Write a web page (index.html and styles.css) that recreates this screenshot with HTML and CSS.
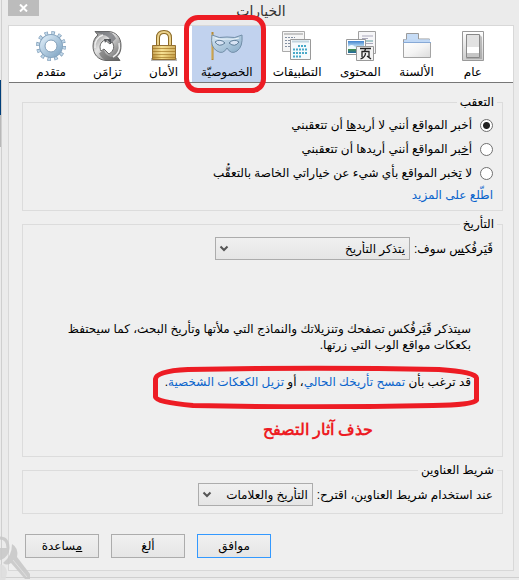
FILE: index.html
```html
<!DOCTYPE html>
<html lang="ar" dir="rtl">
<head>
<meta charset="utf-8">
<title>الخيارات</title>
<link rel="stylesheet" href="styles.css">
</head>
<body>
<svg class="watermark" width="32" height="46" viewBox="0 0 32 46" aria-hidden="true">
  <path d="M0 3q8 0 8 10q0 7-8 11" fill="none" stroke="#c9c9c9" stroke-width="3"/>
  <path d="M0 13h8q0 8-8 12z" fill="#c9c9c9"/>
  <path d="M12 9q7 4 5 13l13 17v5h-5L11 28q-4 3-8 0q9-7 9-19z" fill="#c9c9c9"/>
  <path d="M13 25l14 17" stroke="#dedede" stroke-width="1"/>
  <path d="M0 29q7 2 7 9l-2 8H0" fill="#dedede"/>
</svg>
<div class="window">
  <header class="titlebar">
    <h1>الخيارات</h1>
    <button class="close" aria-label="إغلاق"><svg width="9" height="8" viewBox="0 0 9 8"><path d="M1 0.5l7 7M8 0.5l-7 7" stroke="#fff" stroke-width="2"/></svg></button>
  </header>
  <main class="dialog">
    <nav class="tabs">
      <button class="tab">
        <svg width="32" height="32" viewBox="0 0 32 32">
          <defs>
            <linearGradient id="sw" x2="0" y2="1"><stop offset="0" stop-color="#fff"/><stop offset="1" stop-color="#ccc"/></linearGradient>
            <linearGradient id="folder" x2="1" y2="1"><stop offset="0" stop-color="#fff"/><stop offset=".5" stop-color="#f4f4f4"/><stop offset="1" stop-color="#dcdcdc"/></linearGradient>
            <linearGradient id="blue" x2="1" y2="1"><stop offset="0" stop-color="#d9e9f5"/><stop offset="1" stop-color="#86aac7"/></linearGradient>
            <linearGradient id="gold" x2="1" y2="0"><stop offset="0" stop-color="#b78c38"/><stop offset=".4" stop-color="#f4dd8a"/><stop offset="1" stop-color="#c39b45"/></linearGradient>
            <linearGradient id="steel" x2="1" y2="1"><stop offset="0" stop-color="#777"/><stop offset=".4" stop-color="#e4e4e4"/><stop offset="1" stop-color="#555"/></linearGradient>
            <linearGradient id="sky" x2="0" y2="1"><stop offset="0" stop-color="#3f83cf"/><stop offset=".55" stop-color="#d6effa"/><stop offset=".65" stop-color="#4b9440"/><stop offset="1" stop-color="#2167a4"/></linearGradient>
          </defs>
          <path d="M5.500 1.500h21v29h-21z" fill="url(#sw)" stroke="#999"/>
          <path d="M10 27l-1 2h16V7l-2-2v22z" fill="#8a8a8a" opacity=".5"/>
          <path d="M9.500 4.500h13v23h-13z" fill="#e2e2e2" stroke="#888"/>
          <path d="M10 17h12v6H10z" fill="#fff"/><path d="M10 23h12v4H10z" fill="#c6c6c6"/>
        </svg>
        <span>عام</span>
      </button>
      <button class="tab">
        <svg width="32" height="32" viewBox="0 0 32 32">
          <path d="M5.500 11V3.500h12V9h11v4h-26V9.500h3z" fill="#c6dcf6" stroke="#9b9b9b"/>
          <path d="M2.500 12.500h27v15h-27z" fill="url(#folder)" stroke="#a4a4a4"/>
          <path d="M3 9.500h26v3H3z" fill="#c0d8f5"/><path d="M2 12.500h28" stroke="#87a9d6"/>
        </svg>
        <span>الألسنة</span>
      </button>
      <button class="tab">
        <svg width="32" height="32" viewBox="0 0 32 32">
          <path d="M14.500 1.500h17v22h-17z" fill="#f6f6f8" stroke="#a0a0a0"/>
          <path d="M18 6h11M18 8.500h6M18 13.500h11M20 16.500h8" stroke="#aaa8bb"/><path d="M18 11h11" stroke="#5b9a9e"/>
          <path d="M2.500 9.500h19v15h-19z" fill="#fff" stroke="#999"/>
          <path d="M4 11h16v12H4z" fill="url(#sky)"/><path d="M4 17q4-4 7 0t7-1v3H4z" fill="#eefaff"/>
          <path d="M12.500 16.500h17v14h-17z" fill="#f3f3f3" stroke="#999"/>
          <path d="M16 18.500h11M21.500 19l-1 2.500M18 27V21.500h7V27M21.500 23q0 4-5 6M23 26l4 3" fill="none" stroke="#222" stroke-width="1.300"/>
        </svg>
        <span>المحتوى</span>
      </button>
      <button class="tab broad">
        <svg width="32" height="32" viewBox="0 0 32 32">
          <path d="M1.500 1.500h22v20h-22z" fill="#f5f5f5" stroke="#aaa"/><path d="M3 4h19" stroke="#c6c6c6" stroke-width="2"/>
          <path d="M4 7.500h10M4 10.500h6M4 13.500h5M4 16.500h5" stroke="#8390a3" stroke-dasharray="2 1"/>
          <path d="M9.500 9.500h20v20h-20z" fill="#f6fafc" stroke="#999"/><path d="M11 11.500h17" stroke="#c1d5df" stroke-width="2"/>
          <path d="M17 16h9M12 19.500h14M12 23h14M12 26.500h9" stroke="#48a9c9" stroke-width="2" stroke-dasharray="2 1"/>
        </svg>
        <span>التطبيقات</span>
      </button>
      <button class="tab broad selected" aria-current="page">
        <svg width="32" height="32" viewBox="0 0 32 32">
          <path d="M1.500 2v28" stroke="#b78a32" stroke-width="2"/><path d="M1 4v25" stroke="#ecd084" stroke-width=".7"/>
          <path d="M1 5q7 4 15 2q8 2 15-2q1 12-5 16q-6 4-10-3q-4 7-10 3Q-1 17 1 5z" fill="url(#blue)" stroke="#738fa9"/>
          <path d="M4 12q5-4 10 1q-6 5-10-1zM18 13q5-5 10-1q-4 6-10 1z" fill="#d7e3f4" stroke="#5f7e99"/>
          <path d="M4 8q6 2 12 1q6 1 12-1" stroke="#edf5fa" fill="none"/>
        </svg>
        <span>الخصوصيّة</span>
        <i class="mark-tab"></i>
      </button>
      <button class="tab">
        <svg width="32" height="32" viewBox="0 0 32 32">
          <path d="M3 28h26v3H3z" fill="#bbb"/>
          <path d="M10 17V8q0-6 6-6t6 6v9" fill="none" stroke="#8b6924" stroke-width="4"/><path d="M10 17V8q0-6 6-6t6 6v9" fill="none" stroke="#ead18c" stroke-width="2"/>
          <path d="M4.500 15.500h23v14h-23z" fill="url(#gold)" stroke="#947034"/>
          <path d="M5 18.500h22M5 21.500h22M5 24.500h22M5 27.500h22" stroke="#a77c2c" opacity=".7"/><path d="M5 17h22M5 20h22M5 23h22" stroke="#fff0b5" opacity=".5"/>
        </svg>
        <span>الأمان</span>
      </button>
      <button class="tab">
        <svg width="32" height="32" viewBox="0 0 32 32">
          <path d="M4 1.500h13c8 0 13 6 13 14c0 5-1 8-4 11l3 4H15C7 30 2 24 2 16c0-5 2-9 5-11zM14 10c-5 2-6 7-4 11l3-2 5 5c5-3 6-8 3-12l-2 2z" fill="url(#steel)" fill-rule="evenodd" stroke="#666"/>
          <path d="M4 1.500h11q7 0 10 7l-5 5q-1-8-9-9z" fill="#6b6e73" opacity=".7"/>
          <path d="M29 30.500H16q-5-1-8-7l5-4q1 7 10 8z" fill="#666" opacity=".6"/>
          <path d="M4 18Q3 8 12 5M28 13q2 10-6 14" fill="none" stroke="#eee" stroke-width="1.500"/>
          <path d="M13 9l1 4 2-3 4 4V9z" fill="#55585c"/>
        </svg>
        <span>تزامَن</span>
      </button>
      <button class="tab">
        <svg width="32" height="32" viewBox="0 0 32 32">
          <circle cx="16" cy="16" r="12.500" fill="none" stroke="#7f9db8" stroke-width="5" stroke-dasharray="3.300 3.245"/>
          <circle cx="16" cy="16" r="12.500" fill="none" stroke="#bfd6e8" stroke-width="4" stroke-dasharray="2 4.545" stroke-dashoffset="-.6"/>
          <circle cx="16" cy="16" r="8.500" fill="none" stroke="#87a5bf" stroke-width="7"/>
          <circle cx="16" cy="16" r="8.500" fill="none" stroke="url(#blue)" stroke-width="5"/>
          <circle cx="16" cy="16" r="6" fill="#fff" stroke="#85a2bb"/>
        </svg>
        <span>متقدم</span>
      </button>
    </nav>

    <form class="panel">
      <fieldset class="tracking">
        <legend>التعقب</legend>
        <label class="choice"><input type="radio" name="dnt" checked><span>أخبر المواقع أنني لا أريد<u>ها</u> أن تتعقبني</span></label>
        <label class="choice"><input type="radio" name="dnt"><span>أ<u>خ</u>بر المواقع أنني أريدها أن تتعقبني</span></label>
        <label class="choice"><input type="radio" name="dnt"><span>لا <u>ت</u>خبر المواقع بأي شيء عن خياراتي الخاصة بالتعقُّب</span></label>
        <a class="more" href="#">اطّلع على المزيد</a>
      </fieldset>

      <fieldset class="history">
        <legend>التأريخ</legend>
        <div class="row">
          <label for="mode">ڤَيَرفُك<u>س</u> سوف:</label>
          <span class="picker wide">
            <select id="mode"><option>يتذكر التأريخ</option></select>
            <svg width="10" height="8" viewBox="0 0 10 8"><path d="M1.500 1.500l3.500 3.500l3.500-3.500" fill="none" stroke="#555" stroke-width="2"/></svg>
          </span>
        </div>
        <p class="about">سيتذكر ڤَيَرفُكس تصفحك وتنزيلاتك والنماذج التي ملأتها وتأريخ البحث، كما سيحتفظ بكعكات مواقع الوب التي زرتها.</p>
        <p class="clear">قد ترغب بأن <a href="#">تمسح تأريخك الحالي</a>، أو <a href="#">تزيل الكعكات الشخصية</a>.
          <svg class="mark-line" viewBox="0 0 326 44" preserveAspectRatio="none" aria-hidden="true"><path d="M35 4.500Q165 2 286 4.500Q323 7 323.500 13V35Q320 40 280 40.500Q165 43 40 40.500Q3 37 2.500 32V14Q3 6 35 4.500z" fill="none" stroke="#ed1c24" stroke-width="5"/></svg>
        </p>
        <p class="note">حذف آثار التصفح</p>
      </fieldset>

      <fieldset class="location">
        <legend>شريط العناوين</legend>
        <div class="row">
          <label for="suggest">عند استخدام شريط العناوين، اقترح:</label>
          <span class="picker">
            <select id="suggest"><option>التأريخ والعلامات</option></select>
            <svg width="10" height="8" viewBox="0 0 10 8"><path d="M1.500 1.500l3.500 3.500l3.500-3.500" fill="none" stroke="#555" stroke-width="2"/></svg>
          </span>
        </div>
      </fieldset>

      <div class="actions">
        <button type="button" class="default">موافق</button>
        <button type="button">ألغ</button>
        <button type="button"><u>م</u>ساعدة</button>
      </div>
    </form>
  </main>
</div>
</body>
</html>
```
FILE: styles.css
```css
* { box-sizing: border-box; }
body {
  margin: 0;
  background: linear-gradient(#ebebeb 80px, #003f7a 80px 115px, #b8b8b8 115px 147px, #ebebeb 147px) left top / 1px 100% no-repeat #ebebeb;
  color: #000;
  font: 12px/16px "Liberation Sans", "DejaVu Sans", sans-serif;
}
button, select, input { font: inherit; color: inherit; margin: 0; }
p, h1 { margin: 0; }
a { color: #0a64cc; text-decoration: none; }

.window {
  border-left: 1px solid #cfcfcf;
  border-bottom: 1px solid #cfcfcf;
  margin-left: 1px;
  padding: 0 5px 6px 6px;
}
.titlebar {
  display: grid;
  grid-template-columns: 1fr;
  height: 25px;
}
.titlebar h1 {
  grid-area: 1 / 1;
  justify-self: center;
  font-size: 14px;
  font-weight: 400;
  line-height: 22px;
  color: #333;
}
.close {
  grid-area: 1 / 1;
  justify-self: end;
  width: 31px;
  height: 16px;
  border: 0;
  padding: 0;
  background: #bcbcbc;
  line-height: 0;
}
.dialog { border: 1px solid #d8d8d8; background: #efefef; }

.tabs {
  display: flex;
  height: 57px;
  padding: 0 12px 0 14px;
  background: #fff;
  border-bottom: 1px solid #777;
}
.tab {
  position: relative;
  flex: 1 1 56px;
  display: flex;
  flex-direction: column;
  align-items: center;
  border: 0;
  padding: 4px 0 0;
  background: none;
  white-space: nowrap;
}
.tab svg { flex: none; }
.tab span { line-height: 20px; }
.tab.broad { flex-basis: 70px; }
.tab.selected { background: #c1d2ee; }
.mark-tab {
  position: absolute;
  inset: -11px -4px -11px -8px;
  border: 5px solid #ed1c24;
  border-radius: 14px;
}

.panel { padding: 11px 10px 12px 13px; }
fieldset {
  min-width: 0;
  margin: 0 0 5px;
  border: 1px solid #dcdcdc;
  padding: 0 9px;
}
legend { padding: 0 3px; margin-right: -4px; }
.tracking { height: 117px; padding-top: 3px; }
.history { height: 241px; }
.location { height: 52px; }
.choice {
  display: flex;
  align-items: center;
  gap: 8px;
  height: 24px;
}
.choice input {
  appearance: none;
  width: 13px;
  height: 13px;
  border: 1px solid #707070;
  border-radius: 50%;
  background: #fff;
}
.choice input:checked { background: radial-gradient(circle, #222 0 3px, #fff 4px); }
.more { display: block; line-height: 20px; }
.row { display: flex; align-items: center; gap: 4px; padding-top: 5px; }
.picker { display: grid; width: 115px; }
.picker.wide { width: 195px; }
.picker select {
  grid-area: 1 / 1;
  appearance: none;
  height: 23px;
  border: 1px solid #acacac;
  border-radius: 0;
  padding: 0 4px;
  background: linear-gradient(#f0f0f0, #e5e5e5);
}
.picker svg {
  grid-area: 1 / 1;
  place-self: center end;
  margin-left: 4px;
  pointer-events: none;
}
.about { margin: 61px 22px 0 10px; }
.clear { position: relative; margin: 21px 22px 0 0; width: max-content; }
.mark-line { position: absolute; top: -9px; right: -8px; width: 326px; height: 44px; }
.note {
  margin-top: 29px;
  padding-right: 120px;
  color: #ed1c24;
  font: bold 16px/22px "Liberation Serif", serif;
}

.actions { display: flex; gap: 12px; direction: ltr; flex-direction: row-reverse; justify-content: flex-end; padding: 15px 3px 0; }
.actions button {
  width: 74px;
  height: 24px;
  border: 1px solid #acacac;
  padding: 0;
  background: linear-gradient(#f0f0f0, #e5e5e5);
  direction: rtl;
}
.actions .default { border-color: #3399ff; }
.watermark { position: absolute; left: 0; top: 535px; z-index: 1; opacity: .9; }
```
